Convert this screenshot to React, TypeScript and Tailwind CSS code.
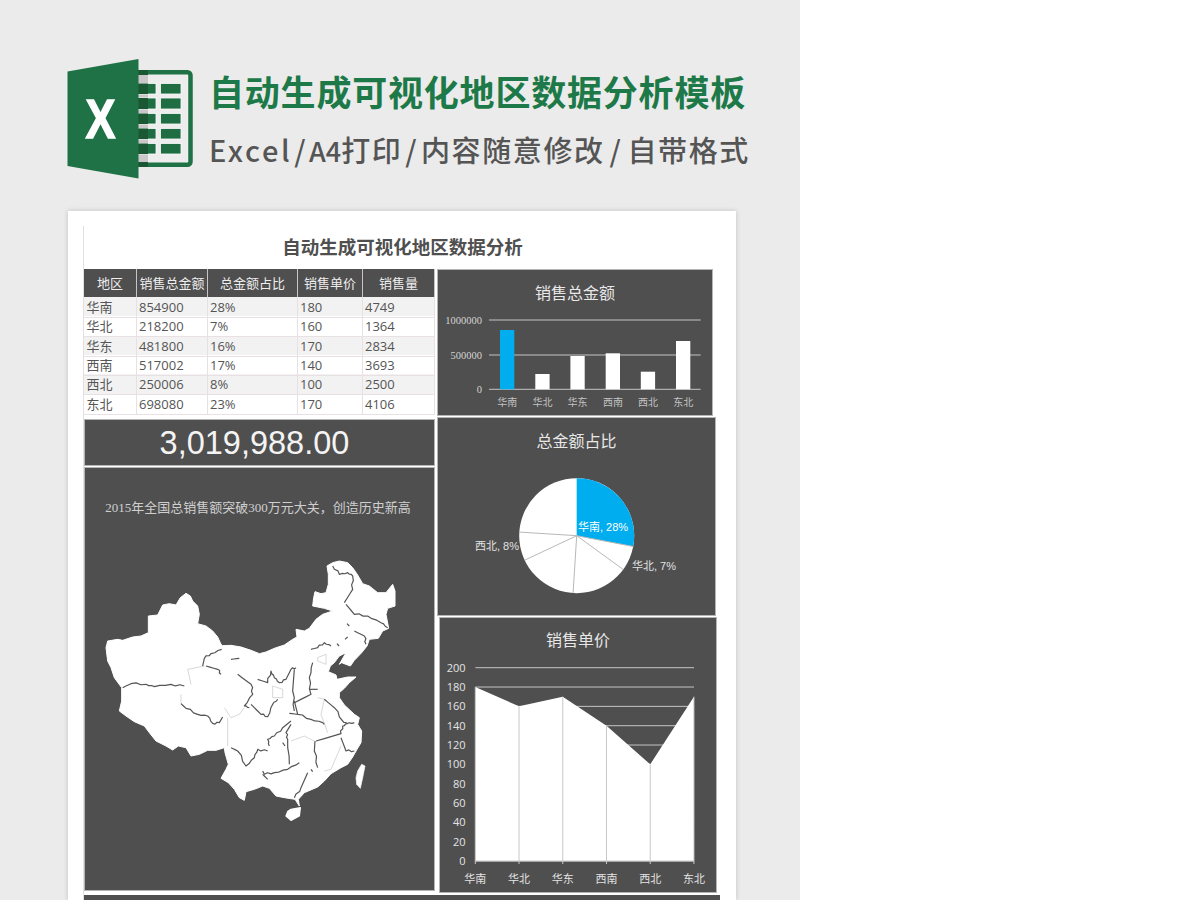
const rows = [
  ['华南', '854900', '28%', '180', '4749'],
  ['华北', '218200', '7%', '160', '1364'],
  ['华东', '481800', '16%', '170', '2834'],
  ['西南', '517002', '17%', '140', '3693'],
  ['西北', '250006', '8%', '100', '2500'],
  ['东北', '698080', '23%', '170', '4106'],
];
const heads = ['地区', '销售总金额', '总金额占比', '销售单价', '销售量'];
const regions = ['华南', '华北', '华东', '西南', '西北', '东北'];
const sans = "'Open Sans','Noto Sans CJK SC',sans-serif";

function ExcelLogo() {
  const ys = [83.5, 98, 113.5, 128.5, 143.5];
  const hs = [10.5, 11, 10.5, 10.5, 10.5];
  return (
    <svg width="127" height="122" viewBox="67 58 127 122" className="shrink-0">
      <rect x="136" y="72.3" width="54.5" height="92.4" rx="3" fill="#ededed" stroke="#1f7246" strokeWidth="4.5" />
      <rect x="138" y="75" width="10" height="87" fill="#c9c7c8" />
      {ys.map((y, i) => (
        <g key={y}>
          <rect x="138" y={y} width="18" height={hs[i]} fill="#1f6e43" stroke="#fafafa" strokeWidth="0.8" />
          <rect x="138" y={y} width="10" height={hs[i]} fill="#1a5733" />
          <rect x="160.5" y={y} width="20.5" height={hs[i]} fill="#1f6e43" stroke="#fafafa" strokeWidth="0.8" />
        </g>
      ))}
      <rect x="138" y="70" width="10" height="5" fill="#1a5733" />
      <rect x="138" y="162" width="10" height="5" fill="#1a5733" />
      <polygon points="67.5,71.5 138.5,59 138.5,178.5 67.5,166" fill="#1f7246" />
      <text x="85.5" y="137.5" fontFamily="'Liberation Sans'" fontWeight="700" fontSize="56" fill="#fff" stroke="#fff" strokeWidth="1.4" textLength="30" lengthAdjust="spacingAndGlyphs">X</text>
    </svg>
  );
}

// adds a small wobble between the traced points so the borders don't look ruled
function wobble(points: string) {
  const p = points.split(' ').map((s) => s.split(',').map(Number));
  let out = `M${p[0][0]},${p[0][1]}`;
  for (let i = 1; i < p.length; i++) {
    const [ax, ay] = p[i - 1];
    const [bx, by] = p[i];
    const len = Math.hypot(bx - ax, by - ay) || 1;
    const off = ((i * 7) % 5) - 2;
    if (len > 14) {
      out += ` L${(ax * 2 + bx) / 3 + ((by - ay) / len) * off * 1.6},${(ay * 2 + by) / 3 - ((bx - ax) / len) * off * 1.6}`;
      out += ` L${(ax + bx * 2) / 3 - ((by - ay) / len) * off},${(ay + by * 2) / 3 + ((bx - ax) / len) * off}`;
    }
    out += ` L${bx},${by}`;
  }
  return out;
}

function ChinaMap() {
  const outline =
    'M45,290 L50,270 80,265 95,268 125,258 150,255 172,245 172,195 200,192 215,162 235,158 255,162 268,140 285,127 298,135 305,150 320,165 325,190 320,218 345,225 365,240 380,258 390,280 395,284 420,283 450,288 480,298 505,308 525,303 550,292 580,282 605,265 618,258 615,235 640,240 655,232 675,205 695,190 725,180 700,172 680,168 665,165 668,140 672,122 690,128 705,125 712,100 712,70 708,45 725,35 745,30 770,35 785,50 800,72 815,98 835,105 860,125 885,125 905,100 912,120 912,165 890,172 885,190 893,232 875,240 862,262 835,265 828,285 812,305 790,328 778,345 770,342 752,335 745,340 765,305 745,315 730,335 718,345 712,362 735,372 738,385 770,378 795,378 775,395 760,412 745,425 745,440 760,462 790,490 805,500 800,520 812,540 810,575 798,595 785,618 770,640 750,650 720,668 700,690 680,708 640,725 622,745 625,765 612,745 580,740 555,735 535,712 515,705 490,715 465,722 460,748 445,740 430,715 412,695 390,682 405,655 412,640 402,605 400,590 375,598 350,598 325,610 300,615 285,590 262,585 245,597 225,585 195,570 175,545 160,525 130,512 105,495 85,480 92,450 92,410 70,380 60,350 50,330 Z';
  const dark = [
    '95,410 120,398 165,400 190,407 240,400 280,405',
    '335,345 340,322 360,308 392,295',
    '270,458 285,472 320,490 350,495 365,517 385,515 395,498',
    '420,325 445,322',
    '345,345 380,355 390,370',
    '440,370 480,400 485,430 460,465 475,470',
    '480,460 510,490 530,497 545,460 560,445',
    '500,385 530,395 540,360 550,380 565,395 585,385 600,355 615,350',
    '610,355 605,420 610,480',
    '610,455 660,430 655,380 665,335',
    '610,450 620,490 660,505 695,515 700,520',
    '595,487 620,490',
    '600,510 575,530 550,555 530,565 535,585',
    '600,520 585,545 590,565 595,640',
    '675,570 750,548 755,525 768,518 790,515',
    '672,570 670,600 680,650',
    '750,560 765,600 790,600',
    '515,660 520,670 550,665 590,655 625,635',
    '515,670 530,685',
    '650,665 630,710 610,740',
    '420,590 440,600 465,645 490,620 500,595 530,600',
    '700,445 730,470 755,510 768,518',
    '760,155 785,115 785,75 770,65 745,70 725,45',
    '765,160 790,190 830,195 870,215 890,230',
    '790,240 820,255 825,280',
    '660,295 680,290 700,275 720,285',
    '655,415 680,415',
    '768,218 775,225',
    '738,278 744,285',
    '762,265 770,258',
    '575,575 582,585',
    '660,655 665,662',
  ];
  const light = [
    '680,320 705,310 705,340 680,330 680,320',
    '545,405 575,415 575,440 545,440 545,405',
    '600,570 640,555 670,570',
    '700,660 720,655 750,585',
    '290,355 340,345',
    '290,355 300,400',
    '270,430 270,458',
    '400,470 420,500 445,490 460,470',
    '410,500 410,585',
    '680,440 700,445 690,490 710,545',
  ];
  return (
    <svg width="330" height="290" viewBox="0 0 990 870" className="ml-[6px] mt-[33px] block">
      <path d={outline} fill="#fff" strokeLinejoin="round" stroke="#fff" strokeWidth="3" />
      <path d="M812,640 L822,645 818,665 815,680 808,712 797,700 795,680 800,660 Z" fill="#fff" strokeLinejoin="round" stroke="#fff" strokeWidth="2" />
      <path d="M600,775 L628,770 625,795 600,808 585,795 590,782 Z" fill="#fff" strokeLinejoin="round" stroke="#fff" strokeWidth="4" />
      {light.map((p) => (
        <polyline key={p} points={p} fill="none" stroke="#c4c4c4" strokeWidth="2" />
      ))}
      {dark.map((p) => (
        <path key={p} d={wobble(p)} fill="none" stroke="#555" strokeWidth="3.6" strokeLinejoin="round" />
      ))}
    </svg>
  );
}

function BarChart() {
  const bars = [
    { x: 500, top: 330 },
    { x: 535.3, top: 374 },
    { x: 570.4, top: 356 },
    { x: 605.7, top: 353.3 },
    { x: 640.8, top: 371.7 },
    { x: 676, top: 341 },
  ];
  const serif = "'Liberation Serif','Noto Sans CJK SC',serif";
  return (
    <svg width="274" height="103" viewBox="438 312 274 103" className="block">
      {[320, 355, 389.3].map((y) => (
        <line key={y} x1="489" x2="700.7" y1={y} y2={y} stroke="#c4c4c4" strokeWidth="1" />
      ))}
      {['1000000', '500000', '0'].map((t, i) => (
        <text key={t} x="482" y={[324, 358.5, 393][i]} textAnchor="end" fontFamily={serif} fontSize="10.5" fill="#d4d4d4">{t}</text>
      ))}
      {bars.map((b, i) => (
        <g key={b.x}>
          <rect x={b.x} y={b.top} width="14.3" height={389.3 - b.top} fill={i === 0 ? '#00adef' : '#fff'} />
          <text x={b.x + 7.2} y="406" textAnchor="middle" fontFamily={serif} fontSize="10" fill="#c4c4c4">{regions[i]}</text>
        </g>
      ))}
    </svg>
  );
}

function PieChart() {
  const pct = [28, 7, 16, 17, 8, 23];
  const cx = 576.7;
  const cy = 535.7;
  const r = 57.5;
  const pt = (a: number) => {
    const t = (a / 100) * 2 * Math.PI;
    return [cx + r * Math.sin(t), cy - r * Math.cos(t)];
  };
  let acc = 0;
  const cuts = pct.map((p) => {
    const s = acc;
    acc += p;
    return { s, e: acc };
  });
  const font = "'Liberation Sans','Noto Sans CJK SC',sans-serif";
  const [ex, ey] = pt(28);
  return (
    <svg width="277" height="151" viewBox="438 464 277 151" className="block">
      <circle cx={cx} cy={cy} r={r} fill="#fff" />
      <path d={`M${cx},${cy} L${cx},${cy - r} A${r},${r} 0 0 1 ${ex},${ey} Z`} fill="#00adef" />
      {cuts.slice(1).map((c) => {
        const [x, y] = pt(c.s);
        return <line key={c.s} x1={cx} y1={cy} x2={x} y2={y} stroke="#b8b8b8" strokeWidth="1" />;
      })}
      <text x="578" y="530.5" fontFamily={font} fontSize="11" fill="#fff">华南, 28%</text>
      <text x="475" y="549.5" fontFamily={font} fontSize="11" fill="#e2e2e2">西北, 8%</text>
      <text x="632" y="570" fontFamily={font} fontSize="11" fill="#e2e2e2">华北, 7%</text>
    </svg>
  );
}

function AreaChart() {
  const vals = [180, 160, 170, 140, 100, 170];
  const x0 = 475.3;
  const step = 43.73;
  const y0 = 861;
  const yAt = (v: number) => y0 - v * 0.9665;
  const pts = vals.map((v, i) => `${x0 + i * step},${yAt(v)}`).join(' ');
  const ticks = [200, 180, 160, 140, 120, 100, 80, 60, 40, 20, 0];
  return (
    <svg width="276" height="234" viewBox="440 658 276 234" className="block">
      {ticks.map((t) => (
        <g key={t}>
          <line x1={x0} x2="694" y1={yAt(t)} y2={yAt(t)} stroke="#c4c4c4" strokeWidth="1" />
          <text x="465.5" y={yAt(t) + 4} textAnchor="end" fontFamily={sans} fontSize="11" fill="#e4e4e4">{t}</text>
        </g>
      ))}
      <polygon points={`${x0},${y0} ${pts} 694,${y0}`} fill="#fff" />
      {vals.map((v, i) => (
        <g key={i}>
          <line x1={x0 + i * step} x2={x0 + i * step} y1={yAt(v)} y2="864" stroke="#c8c8c8" strokeWidth="1" />
          <text x={x0 + i * step} y="882.5" textAnchor="middle" fontFamily={sans} fontSize="11" fill="#e4e4e4">{regions[i]}</text>
        </g>
      ))}
      <line x1={x0} x2="694" y1={y0} y2={y0} stroke="#c8c8c8" strokeWidth="1" />
    </svg>
  );
}

export default function App() {
  return (
    <div className="w-[1200px] h-[900px] overflow-hidden bg-white" style={{ fontFamily: sans }}>
      <div className="w-[800px] h-[900px] bg-[#ebebeb] overflow-hidden">
        <header className="flex h-[211px] pt-[58px] pl-[67px]">
          <ExcelLogo />
          <div className="ml-[15px] font-['Noto_Sans_CJK_SC',sans-serif]">
            <h1 className="mt-[6px] text-[35px] leading-[54px] font-bold tracking-[0.8px] text-[#1d7a48] whitespace-nowrap">
              自动生成可视化地区数据分析模板
            </h1>
            <p className="mt-[6px] text-[29px] leading-[50px] font-medium tracking-[1.6px] text-[#555] whitespace-nowrap">
              <span className="tracking-[2.6px]">Excel</span>
              <span className="mx-[2px]">/</span>
              <span className="text-[27px] tracking-[0px]">A4</span>打印
              <span className="mx-[2.8px]">/</span>内容随意修改
              <span className="mx-[5px]">/</span>自带格式
            </p>
          </div>
        </header>
        <div className="ml-[68px] w-[668px] h-[689px] bg-white pl-[15px] pt-[15px] shadow-[0_0_5px_rgba(0,0,0,0.18)]">
          <div className="border-l border-[#e5dfe1] h-full">
            <h2 className="w-[637px] h-[43px] leading-[41px] text-center text-[18.5px] font-bold text-[#4f4f4f] font-['Noto_Sans_CJK_SC',sans-serif]">
              自动生成可视化地区数据分析
            </h2>
            <div className="flex items-start">
              <div className="w-[351px]">
                <div className="text-[13px] text-[#555]">
                  <div className="grid grid-cols-[53px_71px_90px_65px_72px] h-[28px]">
                    {heads.map((h) => (
                      <div key={h} className="bg-[#4f4f4f] text-[#eee] text-center leading-[28px] border-r border-[#c8c4c4]">{h}</div>
                    ))}
                  </div>
                  {rows.map((r, i) => (
                    <div key={r[0]} className={`grid grid-cols-[53px_71px_90px_65px_72px] h-[19.33px] ${i % 2 === 0 ? 'bg-[#f2f2f2]' : 'bg-white'}`}>
                      {r.map((c, j) => (
                        <div key={j} className={`border-r border-b border-[#e8e0e2] leading-[20px] ${j === 0 ? 'pl-[2.5px]' : 'pl-[2px]'}`}>{c}</div>
                      ))}
                    </div>
                  ))}
                </div>
                <div className="mt-[6px] h-[47px] bg-[#4f4f4f] border border-[#b5b5b5] pr-[10px] text-center text-[32.5px] leading-[47px] text-[#f4f4f4] font-['Liberation_Sans',sans-serif]">
                  3,019,988.00
                </div>
                <div className="mt-[1px] h-[424px] bg-[#4f4f4f] border border-[#b5b5b5] overflow-hidden">
                  <p className="mt-[30px] pr-[3px] h-[20px] leading-[20px] text-center text-[13px] text-[#cfcfcf] font-['Liberation_Serif','Noto_Sans_CJK_SC',serif]">
                    2015年全国总销售额突破300万元大关，创造历史新高
                  </p>
                  <ChinaMap />
                </div>
              </div>
              <div className="ml-[2px]">
                <section className="w-[276px] h-[147px] bg-[#4f4f4f] border border-[#b5b5b5]">
                  <h3 className="h-[42px] leading-[46px] text-center text-base text-[#e8e8e8]">销售总金额</h3>
                  <BarChart />
                </section>
                <section className="mt-[1px] w-[279px] h-[199px] bg-[#4f4f4f] border border-[#b5b5b5]">
                  <h3 className="h-[46px] leading-[46px] text-center text-base text-[#e8e8e8]">总金额占比</h3>
                  <PieChart />
                </section>
                <section className="mt-[1px] ml-[2px] w-[278px] h-[276px] bg-[#4f4f4f] border border-[#b5b5b5]">
                  <h3 className="h-[40px] leading-[44px] text-center text-base text-[#e8e8e8]">销售单价</h3>
                  <AreaChart />
                </section>
              </div>
            </div>
            <div className="mt-[2px] w-[636px] h-[10px] bg-[#4f4f4f]" />
          </div>
        </div>
      </div>
    </div>
  );
}
